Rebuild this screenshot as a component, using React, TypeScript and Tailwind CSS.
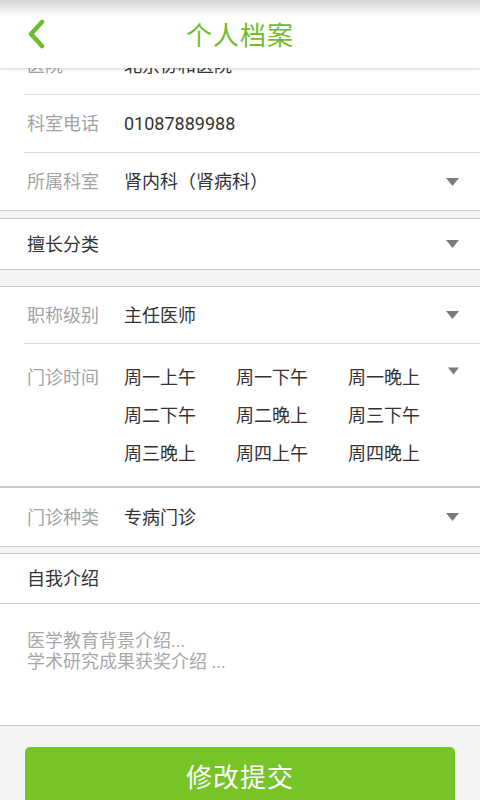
import React from "react";

const FONT = { fontFamily: "Roboto, 'Noto Sans CJK SC', sans-serif" };

const TIMES = [
  "周一上午", "周一下午", "周一晚上",
  "周二下午", "周二晚上", "周三下午",
  "周三晚上", "周四上午", "周四晚上",
];

function Arrow({ className = "" }: { className?: string }) {
  return (
    <svg width="13" height="8" viewBox="0 0 13 8" className={className}>
      <path d="M0 0 H13 L6.5 8 Z" fill="#7a7a7a" />
    </svg>
  );
}

function Row({
  label,
  value,
  arrow,
  divider,
  h = "h-[58px]",
}: {
  label: string;
  value?: string;
  arrow?: boolean;
  divider?: boolean;
  h?: string;
}) {
  return (
    <div className="pl-6">
      <div className={`flex items-center ${h} pr-[21px] ${divider ? "border-b border-[#dcdcdc]" : ""}`}>
        <span className="w-[100px] shrink-0 pl-[3px] text-[18px] text-[#a3a3a3]">{label}</span>
        <span className="flex-1 text-[18px] text-[#333]">{value}</span>
        {arrow && <Arrow />}
      </div>
    </div>
  );
}

function Gap({ h }: { h: string }) {
  return <div className={`${h} bg-[#f4f4f4] border-y border-[#c9c9c9]`} />;
}

export default function App() {
  return (
    <div className="relative w-[480px] h-[800px] overflow-hidden bg-[#f4f4f4]" style={FONT}>
      {/* header overlays the scrolled list */}
      <header className="absolute top-0 left-0 right-0 z-10 h-[68px] bg-white shadow-[0_1px_3px_rgba(0,0,0,0.18)]">
        <div className="absolute top-0 left-0 right-0 h-[16px] bg-gradient-to-b from-[#d4d4d4] to-white" />
        <div className="relative h-full flex items-center justify-center">
          <svg
            width="20"
            height="30"
            viewBox="0 0 20 30"
            className="absolute left-[26px] top-[19px]"
          >
            <path d="M16 3 L5 15 L16 27" fill="none" stroke="#6fbd2c" strokeWidth="4.5" strokeLinecap="round" strokeLinejoin="round" />
          </svg>
          <h1 className="mt-[4px] text-[26px] text-[#6fbd2c] tracking-[1px]">个人档案</h1>
        </div>
      </header>

      <div className="mt-[37px]">
        <div className="bg-white">
          <Row label="医院" value="北京协和医院" divider />
          <Row label="科室电话" value="01087889988" divider />
          <Row label="所属科室" value="肾内科（肾病科）" arrow h="h-[57px]" />
        </div>
        <Gap h="h-[9px]" />
        <div className="bg-white">
          <div className="flex items-center h-[50px] pl-[27px] pr-[21px]">
            <span className="flex-1 text-[18px] text-[#333]">擅长分类</span>
            <Arrow />
          </div>
        </div>
        <Gap h="h-[18px]" />
        <div className="bg-white">
          <Row label="职称级别" value="主任医师" arrow divider h="h-[57px]" />
          <div className="flex pl-6 pr-[21px] pt-[22px] pb-[20px]">
            <span className="w-[100px] shrink-0 pl-[3px] text-[18px] leading-[24px] text-[#a3a3a3]">门诊时间</span>
            <div className="grid grid-cols-[112px_112px_100px] gap-y-[14px] flex-1">
              {TIMES.map((t) => (
                <span key={t} className="text-[18px] leading-[24px] text-[#333]">
                  {t}
                </span>
              ))}
            </div>
            <Arrow className="mt-[1px]" />
          </div>
        </div>
        <Gap h="h-[2px]" />
        <div className="bg-white">
          <Row label="门诊种类" value="专病门诊" arrow />
        </div>
        <Gap h="h-[8px]" />
        <div className="bg-white">
          <div className="flex items-center h-[50px] pl-[27px] border-b border-[#c9c9c9]">
            <span className="text-[18px] text-[#333]">自我介绍</span>
          </div>
          <div className="h-[122px] pl-[27px] pt-[26px] border-b border-[#c9c9c9]">
            <p className="text-[18px] leading-[21px] text-[#a8a8a8]">
              医学教育背景介绍...
              <br />
              学术研究成果获奖介绍 ...
            </p>
          </div>
        </div>
        <div className="px-[25px] pt-[21px]">
          <button className="w-full h-[62px] rounded-[5px] bg-[#76c428] text-white text-[26px] tracking-[1px]">
            修改提交
          </button>
        </div>
      </div>
    </div>
  );
}
